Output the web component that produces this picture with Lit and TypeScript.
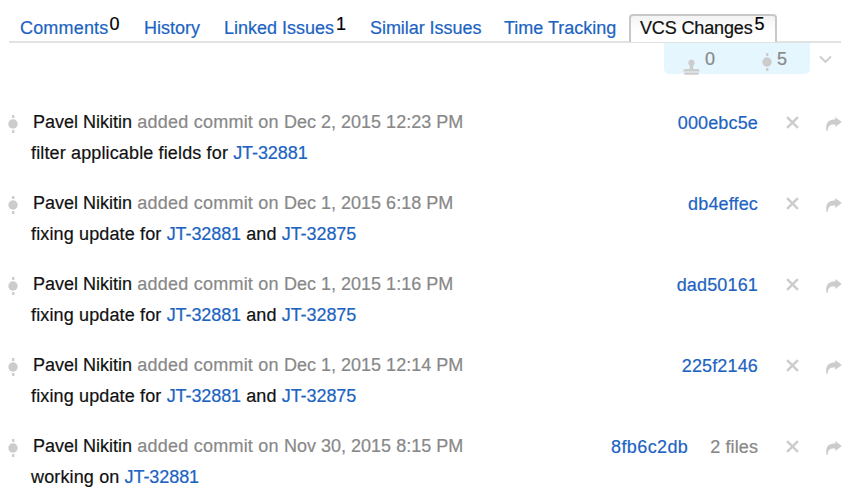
import { LitElement, html, css, svg } from "lit";
import { customElement, property } from "lit/decorators.js";

const commitIcon = html`<svg class="commit-icon" width="12" height="20" viewBox="0 0 12 20">
  ${svg`<circle cx="6" cy="10" r="4.7" /><path d="M5 1h2.4v3H5zM5 16h2.4v3H5z" />`}
</svg>`;

interface Commit {
  date: string;
  message: string;
  issues: string[];
  hash: string;
  files?: string;
}

const commits: Commit[] = [
  { date: "Dec 2, 2015 12:23 PM", message: "filter applicable fields for", issues: ["JT-32881"], hash: "000ebc5e" },
  { date: "Dec 1, 2015 6:18 PM", message: "fixing update for", issues: ["JT-32881", "JT-32875"], hash: "db4effec" },
  { date: "Dec 1, 2015 1:16 PM", message: "fixing update for", issues: ["JT-32881", "JT-32875"], hash: "dad50161" },
  { date: "Dec 1, 2015 12:14 PM", message: "fixing update for", issues: ["JT-32881", "JT-32875"], hash: "225f2146" },
  { date: "Nov 30, 2015 8:15 PM", message: "working on", issues: ["JT-32881"], hash: "8fb6c2db", files: "2 files" },
];

@customElement("commit-row")
class CommitRow extends LitElement {
  @property({ attribute: false }) commit!: Commit;

  static styles = css`
    :host { display: flex; height: 81px; line-height: 31px; white-space: nowrap; }
    .marker { width: 24px; padding: 8px 0 0 7px; box-sizing: border-box; flex: none; line-height: 0; }
    svg { display: block; fill: #ccc; }
    .body { flex: 1; padding: 1px 0 0 7px; }
    .title { padding-left: 2px; color: #888; }
    .author { color: #111; }
    .action { letter-spacing: 0.23px; }
    .message { letter-spacing: 0.14px; }
    .link { color: #1c63c2; }
    .message .link { letter-spacing: -0.08px; }
    .side { display: flex; padding-top: 2px; height: 31px; }
    .hash { letter-spacing: 0.15px; }
    .hash.with-files { letter-spacing: 0.4px; }
    .files { color: #888; margin-left: 22px; letter-spacing: 0.1px; }
    .close { margin: 8px 0 0 28px; }
    .share { margin: 8px 10px 0 26px; }
  `;

  render() {
    const c = this.commit;
    return html`
      <div class="marker">${commitIcon}</div>
      <div class="body">
        <div class="title"><span class="author">Pavel Nikitin</span><span class="action"> added commit on </span>${c.date}</div>
        <div class="message">${c.message} ${c.issues.map((id, i) => html`${i ? " and " : ""}<span class="link">${id}</span>`)}</div>
      </div>
      <div class="side">
        <span class="link hash ${c.files ? "with-files" : ""}">${c.hash}</span>
        ${c.files ? html`<span class="files">${c.files}</span>` : ""}
        <svg class="close" width="13" height="13" viewBox="0 0 13 13"><path d="M.2 1.9 1.9.2 6.5 4.8 11.1.2l1.7 1.7L8.2 6.5l4.6 4.6-1.7 1.7L6.5 8.2 1.9 12.8.2 11.1 4.8 6.5z" /></svg>
        <svg class="share" width="17" height="16" viewBox="0 0 17 16"><path d="M10.3 1 16.8 6l-6.5 5V8.5C5.4 8 3.2 9.3 2.6 15H1.6C-.1 7 3.5 3.6 10.3 3.6z" /></svg>
      </div>
    `;
  }
}

@customElement("app-root")
class AppRoot extends LitElement {
  static styles = css`
    :host {
      display: block; width: 852px; height: 488px; overflow: hidden; background: #fff;
      font: 18px "Liberation Sans", Arial, sans-serif; color: #111; white-space: nowrap;
      -webkit-text-stroke: 0.2px;
    }
    .tabs { display: flex; height: 43px; margin: 0 11px 0 9px; padding-left: 11px; box-sizing: border-box; background: linear-gradient(#e2e2e2, #e2e2e2) 0 41px / 100% 2px no-repeat; }
    .tab { color: #1c63c2; padding-top: 13px; line-height: 30px; display: flex; flex: none; }
    .count { color: #000; line-height: 22px; margin-left: 2px; letter-spacing: 0; }
    .comments { width: 124px; letter-spacing: 0.18px; }
    .comments .count { margin-left: 1px; }
    .history { width: 80px; }
    .linked { width: 146px; }
    .similar { width: 134px; letter-spacing: -0.05px; }
    .time { width: 125px; }
    .active { color: #111; box-sizing: border-box; width: 148px; height: 28px; margin-top: 14px; padding: 0 0 0 9px; border: 2px solid #c8c8c8; border-bottom: 0; border-radius: 4px 4px 0 0; background: linear-gradient(#f3f3f3, #fff 60%); line-height: 25px; letter-spacing: -0.14px; }
    .active .count { line-height: 17px; }
    .toolbar { display: flex; height: 63px; }
    .filters { display: flex; box-sizing: border-box; width: 146px; height: 31px; margin-left: 664px; background: #e6f6fe; border-radius: 0 0 5px 5px; color: #888; line-height: 33px; }
    svg { display: block; fill: #ccc; flex: none; }
    .stamp { margin: 15px 5px 0 19px; }
    .filters .commit-icon { margin: 9px 4px 0 46px; }
    .chevron { margin: 12px 0 0 9px; fill: none; stroke: #ccc; stroke-width: 1.8; }
  `;

  render() {
    return html`
      <div class="tabs">
        <div class="tab comments">Comments<span class="count">0</span></div>
        <div class="tab history">History</div>
        <div class="tab linked">Linked Issues<span class="count">1</span></div>
        <div class="tab similar">Similar Issues</div>
        <div class="tab time">Time Tracking</div>
        <div class="tab active">VCS Changes<span class="count">5</span></div>
      </div>
      <div class="toolbar">
        <div class="filters">
          <svg class="stamp" width="17" height="17" viewBox="0 0 17 17"><path d="M8.5 1.5A3.2 3.2 0 0 0 6.2 6.9C7.2 8 7 10 6.5 11H2.3Q.3 11.4.2 13.6H16.8Q16.7 11.4 14.7 11H10.5C10 10 9.8 8 10.8 6.9A3.2 3.2 0 0 0 8.5 1.5zM1.3 14.6H15.7V16.8H1.3z" /></svg>
          <span>0</span>
          ${commitIcon}
          <span>5</span>
        </div>
        <svg class="chevron" width="13" height="10" viewBox="0 0 13 10"><path d="m1 1.5 5.5 5.5L12 1.5" /></svg>
      </div>
      ${commits.map((c) => html`<commit-row .commit=${c}></commit-row>`)}
    `;
  }
}
